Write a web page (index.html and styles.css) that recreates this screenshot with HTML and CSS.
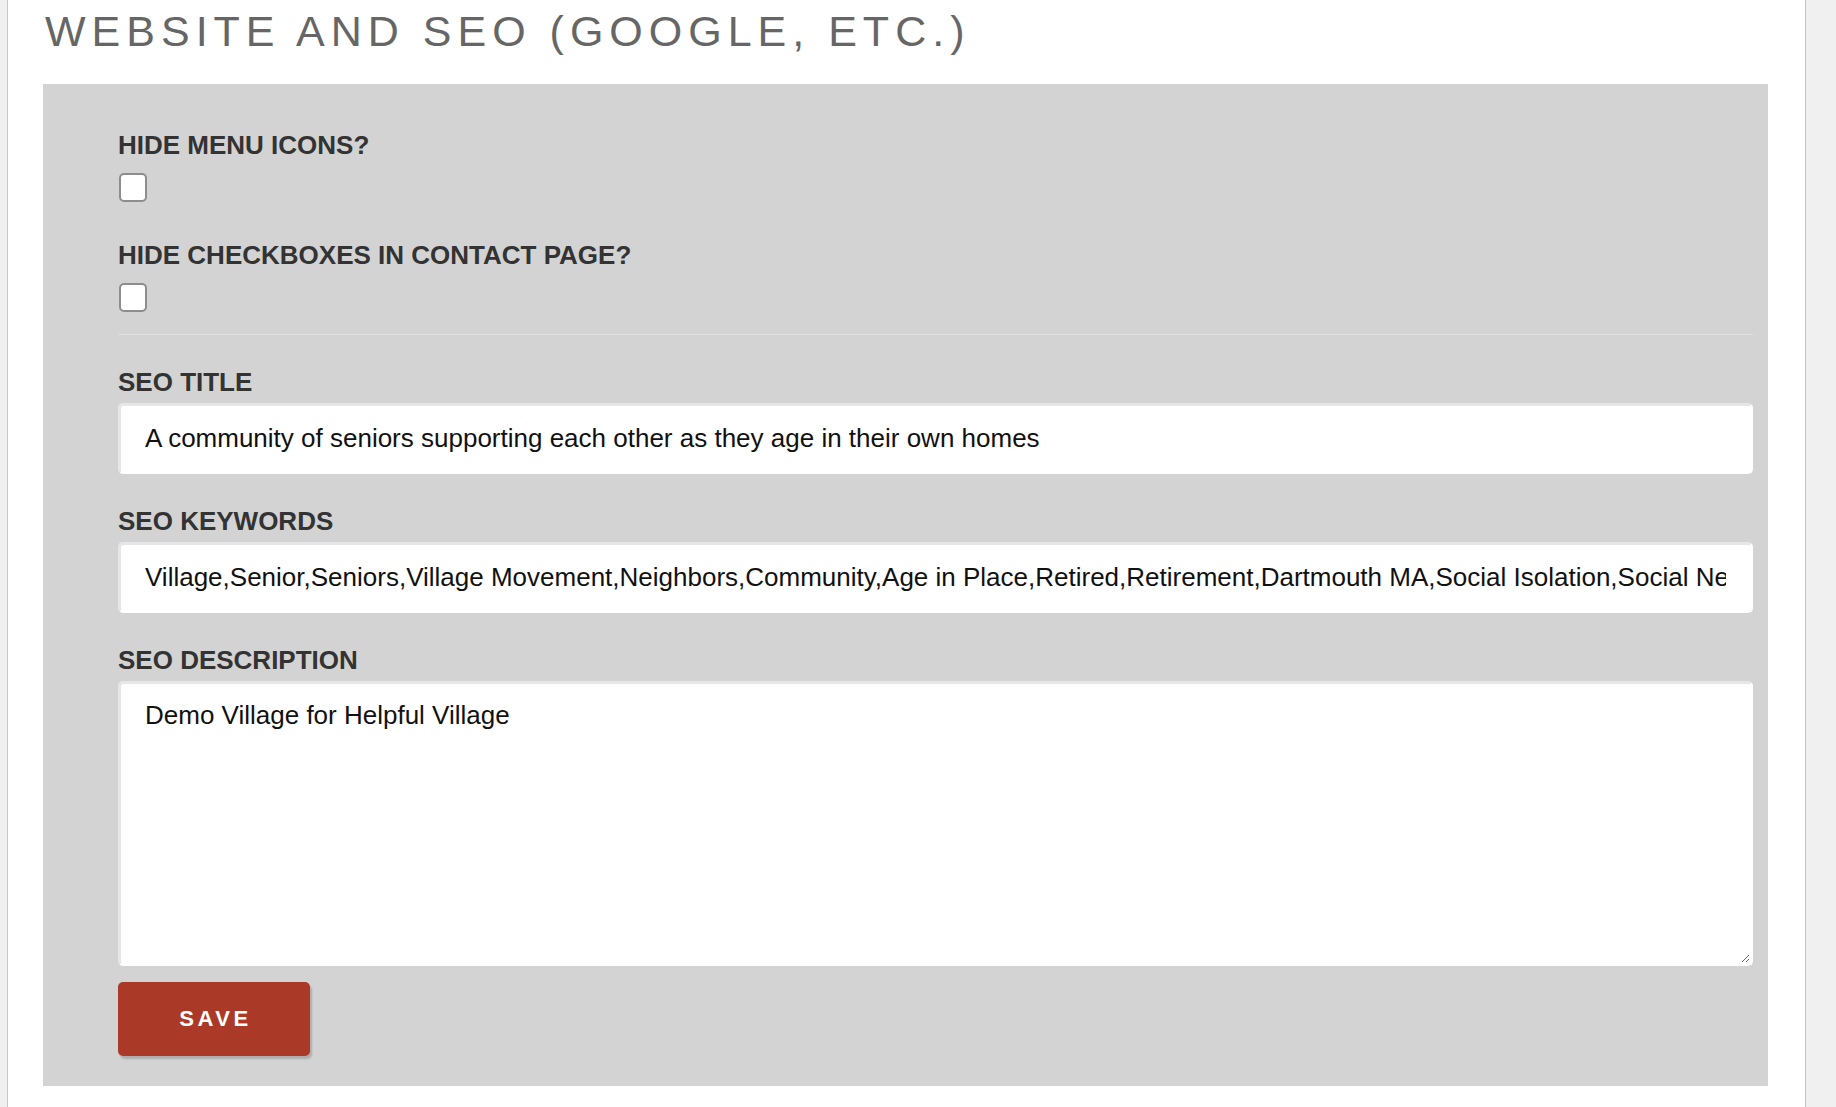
FILE: index.html
```html
<!DOCTYPE html>
<html lang="en">
<head>
<meta charset="utf-8">
<title>Website and SEO</title>
<link rel="stylesheet" href="styles.css">
</head>
<body>
<div class="page">
  <h1 class="page-title">WEBSITE AND SEO (GOOGLE, ETC.)</h1>
  <form class="panel">
    <div class="field field-check">
      <label class="field-label" for="hide-icons">HIDE MENU ICONS?</label>
      <input class="check" type="checkbox" id="hide-icons">
    </div>
    <div class="field field-check">
      <label class="field-label" for="hide-boxes">HIDE CHECKBOXES IN CONTACT PAGE?</label>
      <input class="check" type="checkbox" id="hide-boxes">
    </div>
    <hr class="divider">
    <div class="field">
      <label class="field-label" for="seo-title">SEO TITLE</label>
      <input class="text-input" type="text" id="seo-title" value="A community of seniors supporting each other as they age in their own homes">
    </div>
    <div class="field">
      <label class="field-label" for="seo-keywords">SEO KEYWORDS</label>
      <input class="text-input" type="text" id="seo-keywords" value="Village,Senior,Seniors,Village Movement,Neighbors,Community,Age in Place,Retired,Retirement,Dartmouth MA,Social Isolation,Social Networks">
    </div>
    <div class="field">
      <label class="field-label" for="seo-desc">SEO DESCRIPTION</label>
      <textarea class="text-area" id="seo-desc">Demo Village for Helpful Village</textarea>
    </div>
    <button class="save-btn" type="button">SAVE</button>
  </form>
</div>
</body>
</html>
```

FILE: styles.css
```css
html, body {
  margin: 0;
  padding: 0;
}

body {
  background: #f0f0f0;
  font-family: "Liberation Sans", Arial, sans-serif;
}

.page {
  box-sizing: border-box;
  margin-left: 7px;
  width: 1799px;
  min-height: 100vh;
  background: #fff;
  border-left: 1px solid #c8c8c8;
  border-right: 1px solid #c0c0c0;
  padding: 8px 37px 0 35px;
}

.page-title {
  margin: 0 0 29px;
  padding-left: 2px;
  font-size: 43px;
  line-height: 47px;
  font-weight: normal;
  letter-spacing: 6px;
  color: #666;
}

.panel {
  background: #d3d3d3;
  padding: 44px 15px 30px 75px;
}

.field-label {
  display: block;
  margin: 0;
  font-size: 26px;
  line-height: 35px;
  font-weight: bold;
  color: #333;
}

.field + .field {
  margin-top: 30px;
}

.field-check + .field-check {
  margin-top: 36px;
}

.check {
  -webkit-appearance: none;
  appearance: none;
  display: block;
  box-sizing: border-box;
  width: 28px;
  height: 29px;
  margin: 10px 0 0 1px;
  background: #fff;
  border: 2px solid #8d8d8d;
  border-radius: 5px;
}

.divider {
  margin: 22px 0 30px;
  border: 0;
  height: 1px;
  background: #e0e0e0;
}

.text-input,
.text-area {
  display: block;
  box-sizing: border-box;
  width: 100%;
  margin-top: 3px;
  background: #fff;
  border: 3px solid;
  border-color: #e6e6e6 #fff #fff #e6e6e6;
  border-radius: 5px;
  font-family: "Liberation Sans", Arial, sans-serif;
  font-size: 26px;
  color: #111;
  outline: none;
}

.text-input {
  height: 71px;
  padding: 0 24px;
}

.text-area {
  height: 285px;
  padding: 13px 24px;
  line-height: 1.4;
  resize: vertical;
}

.save-btn {
  display: block;
  box-sizing: border-box;
  width: 192px;
  height: 74px;
  margin-top: 16px;
  background: #aa3a27;
  color: #fff;
  border: 0;
  border-radius: 5px;
  box-shadow: 2px 3px 2px rgba(0, 0, 0, 0.18);
  font-family: "Liberation Sans", Arial, sans-serif;
  font-size: 22px;
  font-weight: bold;
  letter-spacing: 3.5px;
  padding: 0 0 0 3px;
}
```
